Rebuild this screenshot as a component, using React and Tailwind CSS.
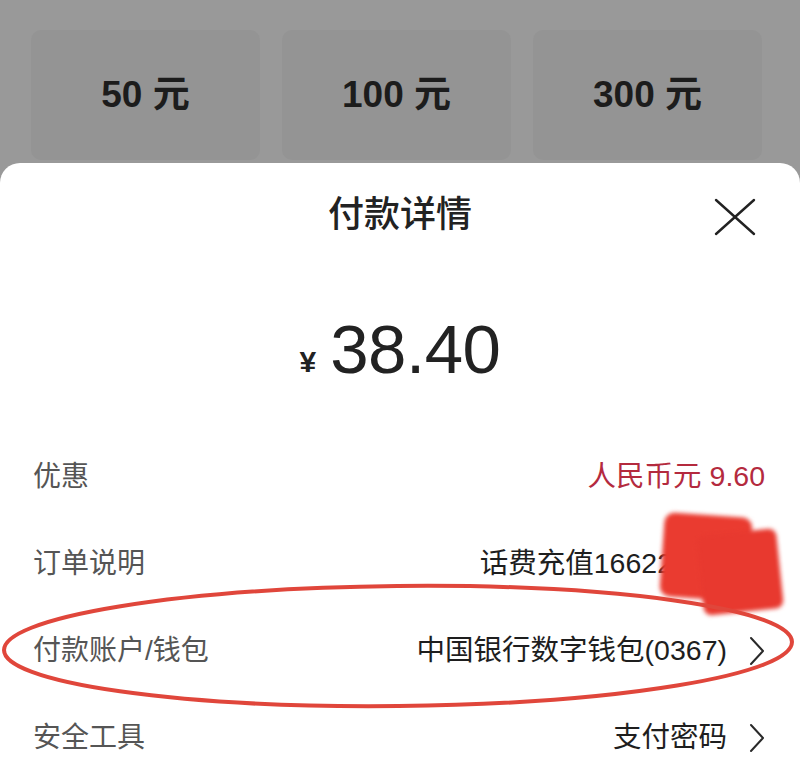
const FONT = { fontFamily: '"Liberation Sans", "Noto Sans CJK SC", sans-serif' };

const amounts = ['50 元', '100 元', '300 元'];

const rows = [
  { label: '优惠', value: '人民币元 9.60', red: true },
  { label: '订单说明', value: '话费充值16622', note: true },
  { label: '付款账户/钱包', value: '中国银行数字钱包(0367)', arrow: true },
  { label: '安全工具', value: '支付密码', arrow: true },
];

const Chevron = () => (
  <svg className="ml-[22px] h-[30px] w-[16px]" viewBox="0 0 16 30" fill="none" stroke="#2a2a2a" strokeWidth="2" strokeLinecap="round" strokeLinejoin="round">
    <path d="M2 2 L14 15 L2 28" />
  </svg>
);

const Row = ({ label, value, red, note, arrow }) => (
  <div className="flex h-[87px] items-center justify-between pl-[33px] pr-[35px]">
    <span className="text-[28px] text-[#555]">{label}</span>
    <div className="flex items-center">
      <span className={`text-[28.5px] ${red ? 'text-[#b42a3e]' : 'text-[#1e1e1e]'} ${note ? 'mr-[92px]' : ''}`}>{value}</span>
      {arrow && <Chevron />}
    </div>
  </div>
);

export default function App() {
  return (
    <div className="relative h-[771px] w-[800px] overflow-hidden bg-[#999999]" style={FONT}>
      {/* 금액 카드 */}
      <div className="grid grid-cols-[229px_229px_229px] gap-[22px] pl-[31px] pt-[30px]">
        {amounts.map((a) => (
          <div key={a} className="flex h-[130px] items-center justify-center rounded-[10px] bg-[#949494]">
            <span className="text-[37px] font-bold text-[#1c1c1c]">{a}</span>
          </div>
        ))}
      </div>

      {/* 결제 상세 시트 */}
      <div className="mt-[3px] rounded-t-[20px] bg-white">
        <div className="relative flex h-[104px] items-center justify-center">
          <span className="text-[36px] font-medium text-[#222]">付款详情</span>
          <svg className="absolute right-[44px] top-[35px] h-[38px] w-[42px]" viewBox="0 0 42 38" fill="none" stroke="#222" strokeWidth="2.4" strokeLinecap="round">
            <path d="M2 2 L40 36" />
            <path d="M40 2 L2 36" />
          </svg>
        </div>

        <div className="flex h-[166px] items-center justify-center">
          <span className="mr-[14px] mt-[22px] text-[30px] font-bold text-[#222]">¥</span>
          <span className="text-[69px] tracking-[-0.5px] text-[#222]">38.40</span>
        </div>

        {rows.map((r) => (
          <Row key={r.label} {...r} />
        ))}
      </div>

      {/* 가림 표시 */}
      <div className="pointer-events-none absolute left-[662px] top-[515px] h-[84px] w-[88px] rotate-[4deg] rounded-[10px] bg-[#ea3b30] blur-[2px]" />
      <div className="pointer-events-none absolute left-[700px] top-[532px] h-[80px] w-[80px] rotate-[-6deg] rounded-[8px] bg-[#e8392f] blur-[2px]" />

      {/* 빨간 원 표시 */}
      <svg className="pointer-events-none absolute left-0 top-[580px] h-[135px] w-[800px]" viewBox="0 0 800 135" fill="none">
        <ellipse cx="398" cy="66" rx="394" ry="60" stroke="#e0463b" strokeWidth="4" transform="rotate(-0.6 398 66)" />
      </svg>
    </div>
  );
}
